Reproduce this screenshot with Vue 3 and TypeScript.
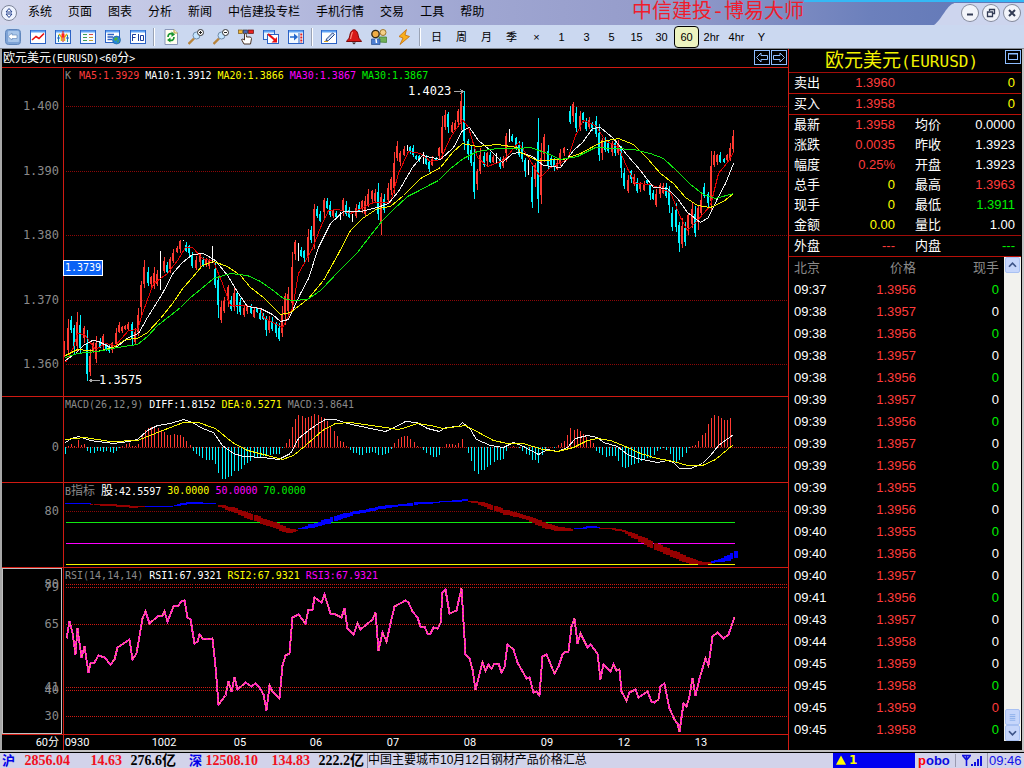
<script setup lang="ts">
interface Pane { top: number; height: number }
interface Bar { x: number; high: number; low: number; tone: string }
interface Legend { text: string; tone: string; han?: string }

const LEFT = 64
const WIDTH = 724

const menus = ['系统', '页面', '图表', '分析', '新闻', '中信建投专栏', '手机行情', '交易', '工具', '帮助']
const periods = ['日', '周', '月', '季', '×', '1', '3', '5', '15', '30', '60', '2hr', '4hr', 'Y']

const pricePane: Pane = { top: 68, height: 328 }
const macdPane: Pane = { top: 397, height: 85 }
const bandPane: Pane = { top: 483, height: 84 }
const rsiPane: Pane = { top: 568, height: 166 }

const box = (p: Pane) => `${LEFT - 0.5} ${p.top - 0.5} ${WIDTH} ${p.height}`
const topOf = (p: Pane, y: number) => ({ top: `${((y - p.top) / p.height) * 100}%` })
const leftOf = (x: number) => ({ left: `${((x - LEFT) / WIDTH) * 100}%` })

const priceScale = [
  { y: 106, label: '1.400' }, { y: 171, label: '1.390' }, { y: 235, label: '1.380' },
  { y: 300, label: '1.370' }, { y: 364, label: '1.360' },
]
const rsiScale = [
  { y: 584, label: '80' }, { y: 587, label: '79' }, { y: 624, label: '65' },
  { y: 687, label: '41' }, { y: 690, label: '40' }, { y: 716, label: '30' },
]

const priceLegend: Legend[] = [
  { text: 'MA5:1.3929', tone: 'red' }, { text: 'MA10:1.3912', tone: 'white' },
  { text: 'MA20:1.3866', tone: 'yellow' }, { text: 'MA30:1.3867', tone: 'magenta' },
  { text: 'MA30:1.3867', tone: 'green' },
]
const macdLegend: Legend[] = [
  { text: 'MACD(26,12,9)', tone: 'grey' }, { text: 'DIFF:1.8152', tone: 'white' },
  { text: 'DEA:0.5271', tone: 'yellow' }, { text: 'MACD:3.8641', tone: 'grey' },
]
const bandLegend: Legend[] = [
  { text: ':42.5597', tone: 'white', han: '股' }, { text: '30.0000', tone: 'yellow' },
  { text: '50.0000', tone: 'magenta' }, { text: '70.0000', tone: 'green' },
]
const rsiLegend: Legend[] = [
  { text: 'RSI(14,14,14)', tone: 'grey' }, { text: 'RSI1:67.9321', tone: 'white' },
  { text: 'RSI2:67.9321', tone: 'yellow' }, { text: 'RSI3:67.9321', tone: 'magenta' },
]

const candleText = `64 341 357 r;68 319 355 r;71 316 333 c;74 325 355 c;77 312 352 r;80 315 353 c;84 326 343 r;87 330 381 c;90 349 376 r;93 342 353 r;96 336 363 r;100 338 348 c;103 334 349 r;106 343 351 c;109 344 353 c;112 342 353 r;116 328 347 r;119 322 333 r;122 326 333 r;125 325 330 r;128 322 330 r;132 322 345 c;135 328 344 r;138 308 336 r;141 281 317 r;144 260 288 r;148 267 286 c;151 276 288 r;154 267 289 r;157 270 286 r;160 251 290 w;164 257 273 r;167 262 273 c;170 257 273 r;173 249 263 r;177 246 253 r;180 240 253 r;183 240 241 w;186 242 252 c;189 245 257 c;192 252 268 c;196 256 270 r;200 253 267 r;203 257 267 c;206 258 267 r;209 259 269 r;212 246 263 w;215 262 288 c;218 276 318 c;221 301 323 r;224 297 313 r;228 285 307 r;231 296 311 c;234 287 311 r;237 291 314 c;240 298 315 c;244 305 317 r;247 305 314 r;251 304 314 c;254 307 318 r;257 307 313 c;260 310 320 c;263 313 320 c;266 316 336 c;269 316 333 r;272 317 331 c;276 322 337 c;279 323 341 c;282 306 337 r;285 293 325 r;288 287 315 r;292 252 312 r;295 240 260 r;298 243 261 w;301 247 257 c;304 250 262 c;308 229 262 r;311 226 243 c;314 204 249 r;317 206 218 c;320 211 222 c;324 198 218 r;327 198 209 c;330 201 217 c;333 210 218 r;336 211 218 c;340 212 220 w;343 198 216 r;346 201 216 c;349 207 218 c;352 214 222 w;356 204 218 r;359 202 212 c;362 200 213 r;365 196 217 r;368 189 207 r;372 190 204 r;375 189 203 r;378 183 220 c;381 193 235 r;384 194 213 c;388 183 203 r;391 177 195 r;394 152 194 r;397 141 161 r;400 151 166 r;404 146 156 r;407 145 151 w;410 146 154 c;413 145 157 c;416 155 160 c;419 155 162 c;423 152 164 w;426 155 165 c;429 161 172 c;432 156 166 r;436 157 161 c;439 147 160 r;442 116 159 r;445 110 130 r;448 112 133 c;452 122 133 r;455 120 131 r;458 109 127 r;461 91 130 r;464 91 150 c;468 139 160 c;471 145 166 c;474 149 199 c;477 169 190 r;480 148 174 r;484 152 167 c;487 152 166 r;490 152 163 c;493 155 163 r;496 153 163 w;500 157 169 c;503 156 168 r;506 133 162 r;509 129 142 w;512 134 142 c;516 137 150 c;519 141 157 c;522 142 162 c;525 158 177 c;528 160 175 w;532 166 208 c;535 163 187 r;538 118 213 c;541 143 204 r;544 134 162 r;548 145 169 c;551 155 167 c;554 158 171 c;557 160 170 r;560 149 166 r;564 147 156 r;567 149 150 w;570 106 124 c;573 102 122 r;576 107 132 c;580 111 131 r;583 112 123 c;586 118 131 c;589 117 129 r;592 122 131 c;596 116 137 c;599 124 161 c;602 138 160 r;605 137 152 c;608 140 153 c;612 141 156 r;615 139 156 c;618 140 155 r;621 146 178 c;624 168 189 c;628 175 193 r;631 170 183 c;634 174 186 r;637 178 193 c;640 182 192 r;644 181 191 r;647 179 184 c;650 183 200 c;653 190 200 c;656 189 207 r;660 183 198 r;663 183 194 r;666 183 198 c;669 186 213 c;672 207 231 c;676 203 232 c;679 222 252 c;682 218 248 r;685 222 246 c;688 213 235 r;692 203 228 r;695 206 237 c;698 206 230 r;701 194 216 r;704 183 198 c;708 192 207 c;711 151 210 r;714 151 167 r;717 154 165 r;720 152 163 c;724 158 163 c;727 154 163 r;730 143 161 r;733 130 152 r`

const tones: Record<string, string> = { r: 'up', c: 'down', w: 'flat' }
const candles: Bar[] = candleText.split(';').map((entry) => {
  const [x, high, low, tone] = entry.split(' ')
  return { x: Number(x), high: Number(high), low: Number(low), tone: tones[tone] }
})
const bodyOf = (c: Bar, i: number) => {
  const span = c.low - c.high
  const head = Math.round(span * (i % 3 === 0 ? 0.1 : 0.25))
  return { y: c.high + head, h: Math.max(1, Math.round(span * 0.6)) }
}

const ma60 = '65,357 77,353 97,351 117,347 137,344 147,336 157,325 170,315 180,307 190,297 200,289 213,278 230,273 247,275 260,281 270,288 283,298 292,300 307,299 320,290 340,269 357,252 370,235 382,220 393,209 407,196 417,191 430,184 438,180 450,168 463,158 477,151 497,148 517,148 530,147 547,153 560,159 577,156 595,147 633,149 650,153 663,158 677,171 690,184 703,194 715,198 733,193'
const ma20 = '65,355 77,349 97,351 113,347 125,339 137,338 147,332 160,318 172,303 183,287 192,277 202,265 213,261 227,266 240,275 250,287 263,297 280,314 290,312 308,298 323,280 338,253 350,230 362,218 377,208 390,206 403,195 420,178 440,167 452,152 462,143 477,146 497,144 517,147 520,152 537,160 563,159 580,153 602,141 618,138 633,144 647,158 660,173 673,183 685,197 697,205 710,207 723,201 733,193'
const ma10 = '65,360 75,353 83,345 92,340 98,341 110,347 117,346 128,337 138,333 147,317 162,293 173,272 182,262 192,254 203,253 215,260 227,275 238,293 247,306 260,308 272,314 280,321 288,319 300,293 308,278 318,247 330,223 343,211 360,211 377,207 388,203 398,191 412,167 422,155 440,159 453,147 462,130 469,127 478,140 490,150 502,162 512,153 520,152 532,156 543,165 560,167 573,150 582,142 592,128 600,127 613,138 627,155 640,170 653,187 667,188 677,198 687,212 700,222 708,217 717,198 725,183 733,163'
const ma5 = '65,362 73,347 77,333 84,334 95,349 105,343 115,345 128,330 137,329 143,310 153,283 167,273 177,260 185,247 192,247 202,258 213,261 222,283 230,305 243,305 260,308 263,317 282,327 292,308 298,273 312,248 320,227 328,210 338,209 350,213 373,202 390,202 398,173 408,151 420,153 430,161 440,159 450,137 462,119 468,127 477,157 487,166 503,160 518,142 528,157 540,177 550,167 567,159 575,135 583,120 595,125 605,140 618,147 627,168 635,183 650,184 670,192 680,217 687,230 697,220 710,205 718,173 727,162 733,152'

const macdZero = 447
const macdValues = [
  -7, 1, 3, 1, 7, 2, 3, -4, -6, -6, -4, -4, -5, -4, -5, -6, -4, -1, 1, 3, 4, 1, 1, 3, 11, 17, 19, 20, 20, 19, 17, 15, 12, 12, 13, 12, 12, 10, 6, 2,
  -4, -7, -9, -11, -13, -13, -13, -17, -26, -32, -32, -30, -29, -24, -24, -22, -18, -16, -14, -11, -10, -10, -9, -9, -8, -7, -7, -7, -1, 4, 8, 20, 28, 32, 31, 29, 30, 31, 33, 32,
  30, 29, 26, 20, 16, 11, 6, 5, 1, -3, -6, -6, -8, -8, -6, -6, -5, -6, -8, -8, -7, -6, -2, 4,
  8, 10, 11, 11, 8, 5, 1, 0, -3, -6, -8, -10, -10, -8, 0, 3, 3, 3, 2, 4, 8, 0, -6, -14, -24, -27, -23, -23, -20, -18, -15, -13, -13, -12, -4, 0, 1, 0, -1, -4,
  -7, -8, -13, -13, -16, -8, -3, 0, 0, -1, 2, 4, 6, 12, 19, 17, 18, 16, 13, 10, 8, 4, -4, -6, -8, -10, -9, -9, -9, -14, -20, -21, -20, -18, -17, -16, -14, -12, -11, -11,
  -8, -4, -2, -1, -3, -7, -15, -16, -13, -10, -6, -1, 1, 2, 6, 12, 14, 23, 29, 32, 31, 29, 27, 27, 29,
]
const stepX = (i: number) => Math.floor(65.2 + i * 3.2)
const macdBars = macdValues.map((v, i) => ({ x: stepX(i), v })).filter((b) => b.v !== 0)
const diff = '65,442 71,438 78,436 90,440 113,443 128,441 137,439 147,430 157,425 170,423 183,419 192,422 202,428 213,432 222,445 233,453 243,456 263,457 278,459 290,453 298,438 308,430 318,423 325,419 335,419 347,423 370,428 385,431 398,425 405,421 416,422 427,428 439,431 445,427 458,426 462,422 470,429 476,439 490,445 503,447 513,442 523,446 538,454 547,449 557,451 567,447 575,438 587,435 597,437 603,442 617,446 627,454 637,458 657,462 667,460 673,462 679,468 690,468 702,463 710,455 718,445 733,434'
const dea = '65,439 84,437 110,441 137,440 157,432 183,422 198,422 215,428 232,442 247,450 263,454 282,459 293,455 305,445 322,430 335,423 350,422 385,427 398,429 405,427 417,423 430,425 443,428 465,425 480,433 493,440 507,443 523,443 542,449 557,451 573,447 587,440 597,438 610,440 625,446 640,453 657,458 673,461 687,465 702,465 715,459 727,449 733,444'

/* Each band is a run of [x, centre, thickness] knots. */
const bandRuns: { tone: string; knots: number[][] }[] = [
  { tone: 'blue', knots: [[65, 503, 1], [87, 503, 1]] },
  { tone: 'maroon', knots: [[88, 504, 1], [107, 505, 2], [133, 507, 2], [142, 506, 1]] },
  { tone: 'blue', knots: [[143, 506, 1], [170, 506, 1], [180, 504, 2], [190, 503, 2], [213, 503, 1]] },
  { tone: 'maroon', knots: [[216, 505, 2], [233, 510, 5], [250, 517, 6], [267, 523, 6], [280, 528, 6], [287, 531, 5], [295, 530, 1]] },
  { tone: 'blue', knots: [[297, 529, 1], [310, 526, 4], [327, 521, 5], [340, 516, 5], [357, 512, 3], [377, 508, 3], [400, 505, 2], [410, 504, 3], [437, 502, 1], [465, 500, 2]] },
  { tone: 'maroon', knots: [[467, 501, 1], [477, 503, 3], [490, 507, 5], [503, 512, 5], [523, 517, 4], [537, 523, 6], [553, 528, 5], [570, 530, 2]] },
  { tone: 'blue', knots: [[571, 529, 1], [590, 527, 2], [598, 527, 1]] },
  { tone: 'maroon', knots: [[599, 528, 1], [620, 530, 2], [633, 536, 5], [647, 543, 7], [667, 552, 7], [683, 559, 7], [697, 563, 4], [708, 563, 2]] },
  { tone: 'blue', knots: [[709, 562, 1], [717, 561, 3], [727, 558, 6], [734, 554, 7]] },
]
const bandBars = Array.from({ length: 210 }, (_, i) => stepX(i)).flatMap((x) => {
  for (const run of bandRuns) {
    for (let k = 1; k < run.knots.length; k++) {
      const [x0, y0, t0] = run.knots[k - 1]
      const [x1, y1, t1] = run.knots[k]
      if (x >= x0 && x <= x1) {
        const f = (x - x0) / (x1 - x0)
        const h = Math.round(t0 + (t1 - t0) * f)
        return [{ x, y: Math.round(y0 + (y1 - y0) * f - h / 2), h, tone: run.tone }]
      }
    }
  }
  return []
})

const rsi = '66,638 69,621 72,632 75,654 77,628 81,657 84,646 88,672 90,663 94,662 98,655 104,657 110,664 114,659 117,647 129,639 132,659 136,653 142,618 145,611 149,623 157,616 162,615 164,611 167,621 173,606 178,605 181,601 184,600 187,617 190,619 194,643 197,641 199,634 203,639 212,638 215,666 218,704 225,695 228,681 231,691 234,677 237,689 245,682 251,686 255,683 259,687 263,694 266,710 269,685 272,691 279,698 282,665 285,655 289,653 292,617 298,614 305,623 308,609 312,609 314,597 321,602 324,594 330,613 333,613 341,617 344,608 347,628 353,634 357,623 360,629 372,619 375,612 378,650 382,632 386,641 390,623 394,606 405,600 408,602 412,611 417,617 420,626 424,626 427,633 430,633 433,627 437,628 440,623 442,592 445,589 449,613 456,610 461,588 465,654 469,658 472,669 475,689 482,662 485,670 488,664 491,668 494,663 498,663 501,672 504,667 507,644 513,649 517,662 526,678 529,677 533,692 536,691 539,695 542,656 546,654 554,673 558,666 562,654 565,651 568,651 571,626 574,618 577,643 580,633 587,647 590,644 597,653 600,679 603,664 610,671 613,664 616,670 619,669 621,691 626,700 629,692 635,689 638,697 647,691 651,701 654,702 658,699 660,686 664,683 669,708 674,719 677,723 679,731 683,703 686,706 689,696 692,678 695,695 699,678 705,658 708,665 712,636 717,632 723,638 728,634 734,617'

const dates = [
  { x: 77, label: '0930' }, { x: 164, label: '1002' }, { x: 240, label: '05' },
  { x: 316, label: '06' }, { x: 393, label: '07' }, { x: 470, label: '08' },
  { x: 547, label: '09' }, { x: 624, label: '12' }, { x: 701, label: '13' },
]

const quotes = [
  ['最新', '1.3958', 'red', '均价', '0.0000', 'white'],
  ['涨跌', '0.0035', 'red', '昨收', '1.3923', 'white'],
  ['幅度', '0.25%', 'red', '开盘', '1.3923', 'white'],
  ['总手', '0', 'yellow', '最高', '1.3963', 'red'],
  ['现手', '0', 'yellow', '最低', '1.3911', 'green'],
  ['金额', '0.00', 'yellow', '量比', '1.00', 'white'],
]
const ticks = [
  ['09:37', '1.3956', 'green'], ['09:38', '1.3957', 'white'], ['09:38', '1.3956', 'green'],
  ['09:38', '1.3957', 'white'], ['09:38', '1.3956', 'green'], ['09:39', '1.3957', 'white'],
  ['09:39', '1.3956', 'green'], ['09:39', '1.3957', 'white'], ['09:39', '1.3956', 'green'],
  ['09:39', '1.3955', 'green'], ['09:39', '1.3956', 'white'], ['09:40', '1.3955', 'green'],
  ['09:40', '1.3956', 'white'], ['09:40', '1.3957', 'white'], ['09:41', '1.3956', 'green'],
  ['09:43', '1.3957', 'white'], ['09:44', '1.3958', 'white'], ['09:45', '1.3959', 'white'],
  ['09:45', '1.3958', 'green'], ['09:45', '1.3959', 'red'], ['09:45', '1.3958', 'green'],
]
</script>

<template>
  <div class="app">
    <header class="menubar">
      <svg class="logo" viewBox="0 0 18 18" aria-hidden="true">
        <circle cx="9" cy="9" r="7.5" fill="#eef3ff" stroke="#7d8498" />
        <path d="M6 8 9 4.500 12 8ZM6 10 9 13.500 12 10Z" fill="#fff" stroke="#24418c" />
      </svg>
      <nav class="menus">
        <button v-for="m in menus" :key="m" type="button">{{ m }}</button>
      </nav>
      <h1>中信建投-博易大师</h1>
      <div class="window-edge">
        <svg class="corner" viewBox="0 0 28 25" aria-hidden="true">
          <path d="M0 25C8 20 13 3 22 3H28V25Z" fill="#cdd5ee" />
        </svg>
        <div class="controls">
          <button type="button" aria-label="最小化"><svg viewBox="0 0 16 16"><path d="M5 9.500H11" stroke="#333c55" stroke-width="2" /></svg></button>
          <button type="button" aria-label="还原"><svg viewBox="0 0 16 16"><path d="M6.500 6V4.500H11.500V8.500H10M4.500 7H9.500V11.500H4.500Z" fill="none" stroke="#333c55" stroke-width="1.300" /></svg></button>
          <button type="button" aria-label="关闭"><svg viewBox="0 0 16 16"><path d="M5 5 11 11M11 5 5 11" stroke="#333c55" stroke-width="2" /></svg></button>
        </div>
      </div>
    </header>

    <div class="toolbar">
      <button type="button" aria-label="返回"><svg viewBox="0 0 16 16"><rect x=".5" y=".5" width="15" height="15" rx="3" fill="#7ea3d6" stroke="#5f86bd" /><rect x="3" y="2" width="11" height="11" rx="1" fill="#a9c6ea" /><path d="M3 7.500 7 4V6H12V9.500H7V11Z" fill="#fff" stroke="#5d80b4" stroke-width=".6" /></svg></button>
      <button type="button" aria-label="分时图"><svg viewBox="0 0 16 16"><rect x=".5" y="1.500" width="15" height="13" fill="#fff" stroke="#2b62c4" /><path d="M1 2.500H15" stroke="#62a5f5" stroke-width="2" /><path d="M2 11 6 7.500 9 9.500 14 4.500" fill="none" stroke="#e81010" stroke-width="1.600" /></svg></button>
      <button type="button" aria-label="K线图"><svg viewBox="0 0 16 16"><rect x=".5" y="1.500" width="15" height="13" fill="#eef7ff" stroke="#2b62c4" /><path d="M1 2.500H15" stroke="#62a5f5" stroke-width="2" /><path d="M3.500 6V13M12.500 6V13" stroke="#198f9d" /><path d="M2.500 9H4.500M11.500 9H13.500" stroke="#2b62c4" stroke-width="2" /><path d="M4 5 6.500 8V12M12 5 9.500 8V12" fill="none" stroke="#e4b110" stroke-width="1.500" /><path d="M8 2V13" stroke="#e01010" /><path d="M6.500 6.500H9.500" stroke="#f22" stroke-width="4" /></svg></button>
      <button type="button" aria-label="报价表"><svg viewBox="0 0 16 16"><rect x=".5" y="1.500" width="15" height="13" fill="#f5faff" stroke="#2b62c4" /><path d="M1 2.500H15" stroke="#62a5f5" stroke-width="2" /><path d="M3 5.500H7M3 8.500H7M3 11.500H7" stroke="#3d9d59" /><path d="M9 5.500H13" stroke="#db4242" /><path d="M9 8.500H13M9 11.500H13" stroke="#bf9b30" /></svg></button>
      <button type="button" aria-label="资讯"><svg viewBox="0 0 16 16"><rect x=".5" y="1.500" width="14" height="12" fill="#fff" stroke="#2b62c4" /><path d="M1 2.500H14" stroke="#62a5f5" stroke-width="2" /><path d="M2.500 5.500H9M2.500 8H8M2.500 10.500H7" stroke="#2d5fc0" stroke-width="1.300" /><circle cx="11.500" cy="11" r="4" fill="#2687d8" stroke="#1b5b9c" stroke-width=".6" /><path d="M9 10C10 8 12 8 13 9L12 11 10 12ZM12 12 14 11 13 14Z" fill="#4fb13b" /></svg></button>
      <button type="button" aria-label="F10"><svg viewBox="0 0 16 16"><rect x=".5" y="1.500" width="15" height="13" fill="#fff" stroke="#2b62c4" /><path d="M1 2.500H15" stroke="#62a5f5" stroke-width="2" /><path d="M2.500 12V5.500H6M2.500 8.500H5.500M8.500 5V12M10.500 6.500H13.500V11.500H10.500Z" fill="none" stroke="#1c3f9c" /></svg></button>
      <i class="split"></i>
      <button type="button" aria-label="刷新"><svg viewBox="0 0 16 16"><path d="M2 .500H11L14.500 4V15.500H2Z" fill="#fffef0" stroke="#8896b8" /><path d="M11 .500V4H14.500" fill="#fff4b0" stroke="#b2a24c" /><path d="M5 8C5 5 7 4 9.500 5M11 8C11 11 9 12 6.500 11" fill="none" stroke="#189530" stroke-width="1.700" /><path d="M8.500 2.500 12 5.500 8.500 8ZM7.500 8.500V13.500L4 11Z" fill="#189530" /></svg></button>
      <button type="button" aria-label="放大"><svg viewBox="0 0 16 16"><path d="M.500 15 6 9.500" stroke="#b8843c" stroke-width="2.400" /><circle cx="8.500" cy="6.500" r="3.500" fill="#c4e4ff" stroke="#6f8ba8" /><circle cx="12.500" cy="3.500" r="3" fill="#fff" stroke="#333" /><path d="M11 3.500H14M12.500 2V5" stroke="#222" /></svg></button>
      <button type="button" aria-label="缩小"><svg viewBox="0 0 16 16"><path d="M.500 15 6 9.500" stroke="#b8843c" stroke-width="2.400" /><circle cx="8.500" cy="6.500" r="3.500" fill="#c4e4ff" stroke="#6f8ba8" /><circle cx="12.500" cy="3.500" r="3" fill="#fff" stroke="#333" /><path d="M11 3.500H14" stroke="#222" /></svg></button>
      <button type="button" aria-label="选择"><svg viewBox="0 0 16 16"><rect x=".5" y="1" width="4" height="3.500" fill="#f2b632" stroke="#76561c" stroke-width=".7" /><rect x="5.500" y="1" width="4" height="3.500" fill="#4a68b8" stroke="#333" stroke-width=".7" /><rect x="10.500" y="1" width="5" height="3.500" fill="#e82020" stroke="#611" stroke-width=".7" /><path d="M7 4.500C8 4 8.500 5 8.500 8H12.500L13.500 9.500 12.500 15H6L3.500 10.500 5 10 6.500 11V5Z" fill="#fff" stroke="#4a3528" /></svg></button>
      <button type="button" aria-label="切换窗口"><svg viewBox="0 0 16 16"><rect x=".5" y="1.500" width="11" height="9" fill="#e8f4ff" stroke="#2b62c4" /><rect x="4.500" y="5.500" width="11" height="9" fill="#fff" stroke="#2b62c4" /><path d="M1 2.500H11" stroke="#62a5f5" stroke-width="2" /><path d="M5 5 12 11" stroke="#e81010" stroke-width="2.200" /><path d="M14 13.500H8.500L14 8Z" fill="#e81010" /></svg></button>
      <button type="button" aria-label="侧栏"><svg viewBox="0 0 16 16"><rect x=".5" y="1.500" width="15" height="13" fill="#f2f9ff" stroke="#2b62c4" /><path d="M1 2.500H15" stroke="#62a5f5" stroke-width="2" /><path d="M2 8H8" stroke="#2467cc" stroke-width="1.500" /><path d="M6 4.500 10 8 6 11.500Z" fill="#2467cc" /><path d="M11 4V14" stroke="#2b62c4" /><path d="M13.300 4.500V14" stroke="#e02020" stroke-width="2" stroke-dasharray="2 1" /></svg></button>
      <i class="split"></i>
      <button type="button" aria-label="画线"><svg viewBox="0 0 16 16"><rect x=".5" y="1.500" width="15" height="13" fill="#fff" stroke="#2b62c4" /><path d="M1 2.500H15" stroke="#62a5f5" stroke-width="2" /><path d="M5.500 10 11.500 4 13.500 5.500 7.500 11.500 5 12Z" fill="#cfe0fa" stroke="#27437f" /><path d="M3 12.500H7" stroke="#d9a520" /></svg></button>
      <button type="button" aria-label="预警"><svg viewBox="0 0 16 16"><path d="M8 .800C10.500 .800 12 4 12.500 8 13 10 14.500 10.500 15.500 12.500H.500C1.500 10.500 3 10 3.500 8 4 4 5.500 .800 8 .800Z" fill="#d71919" stroke="#7a0909" /><path d="M6.500 3C5.500 5 5 8 4.500 10" fill="none" stroke="#ff8a7a" stroke-width="1.200" /><path d="M6 13.500H10L8 15.500Z" fill="#2f2222" /></svg></button>
      <button type="button" aria-label="用户"><svg viewBox="0 0 16 16"><circle cx="12" cy="3.500" r="3" fill="#f4cf88" stroke="#a0762c" /><path d="M8 13V8H15.500V13.500Z" fill="#72b158" stroke="#3c7a2b" stroke-width=".7" /><circle cx="4.500" cy="5" r="3.700" fill="#f0ad45" stroke="#302817" stroke-width="1.300" /><path d="M.500 15V10H9V15.500H.500Z" fill="#4d7fd2" stroke="#28508f" stroke-width=".7" /><path d="M5 10 5.500 14" stroke="#fff" stroke-width="1.500" /></svg></button>
      <button type="button" aria-label="闪电下单"><svg viewBox="0 0 16 16"><path d="M10.500 .500 3 7.500 7 9 4 15.500 13.500 7.500 9 6Z" fill="#f9ae1c" stroke="#c26d0c" stroke-width=".8" /></svg></button>
      <i class="split"></i>
      <button v-for="p in periods" :key="p" type="button" class="period" :class="{ active: p === '60' }">{{ p }}</button>
    </div>

    <main class="workspace">
      <section class="charts">
        <div class="chart-title">
          <h2>欧元美元<span class="mono">(EURUSD)&lt;60</span>分<span class="mono">&gt;</span></h2>
          <div class="pager">
            <button type="button" aria-label="上一个"><svg viewBox="0 0 14 13"><path d="M1.500 6.500 6 2V4.500H12.500V8.500H6V11Z" fill="none" stroke="#8dbdff" /></svg></button>
            <button type="button" aria-label="下一个"><svg viewBox="0 0 14 13"><path d="M12.500 6.500 8 2V4.500H1.500V8.500H8V11Z" fill="none" stroke="#8dbdff" /></svg></button>
          </div>
        </div>

        <div class="pane">
          <div class="scale">
            <span v-for="s in priceScale" :key="s.label" :style="topOf(pricePane, s.y)">{{ s.label }}</span>
          </div>
          <div class="plot">
            <svg :viewBox="box(pricePane)" preserveAspectRatio="none" aria-hidden="true">
              <path v-for="s in priceScale" :key="s.y" class="grid" :d="`M65 ${s.y}H787`" />
              <g v-for="(c, i) in candles" :key="c.x" :class="c.tone">
                <rect :x="c.x - 0.5" :y="c.high - 0.5" width="1" :height="c.low - c.high" />
                <rect v-if="c.tone !== 'flat'" :x="c.x - 1.5" :y="bodyOf(c, i).y - 0.5" width="2" :height="bodyOf(c, i).h" />
              </g>
              <polyline class="line ma5" :points="ma5" />
              <polyline class="line ma10" :points="ma10" />
              <polyline class="line ma20" :points="ma20" />
              <polyline class="line ma60" :points="ma60" />
              <path class="pointer" d="M453 91H463M460 89 463 91 460 93M99 380H89M92 378 89 380 92 382" />
            </svg>
            <div class="legend"><span class="grey key">K</span><span v-for="(l, i) in priceLegend" :key="i" :class="l.tone">{{ l.text }}</span></div>
            <span class="note" :style="[topOf(pricePane, 91), leftOf(408)]">1.4023</span>
            <span class="note" :style="[topOf(pricePane, 380), leftOf(99)]">1.3575</span>
            <span class="tag" :style="topOf(pricePane, 268)">1.3739</span>
          </div>
        </div>

        <div class="pane">
          <div class="scale"><span :style="topOf(macdPane, 447)">0</span></div>
          <div class="plot">
            <svg :viewBox="box(macdPane)" preserveAspectRatio="none" aria-hidden="true">
              <path class="grid bright" d="M65 447H787" />
              <rect v-for="b in macdBars" :key="b.x" :class="b.v > 0 ? 'up' : 'down'" :x="b.x - 0.5" :y="(b.v > 0 ? macdZero - b.v : macdZero) - 0.5" width="1" :height="Math.abs(b.v)" />
              <polyline class="line ma10" :points="diff" />
              <polyline class="line ma20" :points="dea" />
            </svg>
            <div class="legend"><span v-for="l in macdLegend" :key="l.text" :class="l.tone">{{ l.text }}</span></div>
          </div>
        </div>

        <div class="pane">
          <div class="scale"><span :style="topOf(bandPane, 511)">80</span></div>
          <div class="plot">
            <svg :viewBox="box(bandPane)" preserveAspectRatio="none" aria-hidden="true">
              <path class="grid" d="M65 511H787" />
              <path class="line ma60" d="M65 522H734" />
              <path class="line level" d="M65 543H734" />
              <path class="line ma20" d="M65 564H734" />
              <rect v-for="b in bandBars" :key="b.x" :class="b.tone" :x="b.x - 0.5" :y="b.y - 0.5" :width="b.x % 5 ? 4 : 3" :height="b.h" />
            </svg>
            <div class="legend"><span class="grey">B<b>指标</b></span><span v-for="l in bandLegend" :key="l.text" :class="l.tone"><b v-if="l.han">{{ l.han }}</b>{{ l.text }}</span></div>
          </div>
        </div>

        <div class="pane">
          <div class="scale selected">
            <span v-for="s in rsiScale" :key="s.label" :style="topOf(rsiPane, s.y)">{{ s.label }}</span>
          </div>
          <div class="plot">
            <svg :viewBox="box(rsiPane)" preserveAspectRatio="none" aria-hidden="true">
              <path v-for="s in rsiScale" :key="s.y" class="grid bright" :d="`M65 ${s.y}H787`" />
              <polyline class="line rsi" :points="rsi" />
              <polyline class="line rsi-dots" :points="rsi" />
            </svg>
            <div class="legend"><span v-for="l in rsiLegend" :key="l.text" :class="l.tone">{{ l.text }}</span></div>
          </div>
        </div>

        <div class="pane dates">
          <div class="unit">60分</div>
          <div class="plot"><span v-for="d in dates" :key="d.label" :style="leftOf(d.x)">{{ d.label }}</span></div>
        </div>
      </section>

      <aside class="quote">
        <div class="symbol">
          <h2>欧元美元<span class="mono">(EURUSD)</span></h2>
          <button type="button" aria-label="展开"><svg viewBox="0 0 16 14"><rect x="3.500" y="3.500" width="9" height="6" fill="none" stroke="#8dbdff" /><path d="M3 4H13" stroke="#8dbdff" /></svg></button>
        </div>
        <dl class="row ruled"><dt>卖出</dt><dd class="red">1.3960</dd><dt></dt><dd class="yellow">0</dd></dl>
        <dl class="row ruled"><dt>买入</dt><dd class="red">1.3958</dd><dt></dt><dd class="yellow">0</dd></dl>
        <dl v-for="q in quotes" :key="q[0]" class="row"><dt>{{ q[0] }}</dt><dd :class="q[2]">{{ q[1] }}</dd><dt>{{ q[3] }}</dt><dd :class="q[5]">{{ q[4] }}</dd></dl>
        <dl class="row over ruled"><dt>外盘</dt><dd class="red">---</dd><dt>内盘</dt><dd class="green">---</dd></dl>
        <div class="ticks">
          <table>
            <thead><tr><th>北京</th><th>价格</th><th>现手</th></tr></thead>
            <tbody>
              <tr v-for="(t, i) in ticks" :key="i"><td>{{ t[0] }}</td><td class="red">{{ t[1] }}</td><td :class="t[2]">0</td></tr>
            </tbody>
          </table>
          <div class="scroll">
            <button type="button" aria-label="向上"><svg viewBox="0 0 14 16"><path d="M3 10 7 6 11 10" fill="none" stroke="#3d5488" stroke-width="2" /></svg></button>
            <div class="track"></div>
            <div class="thumb"><svg viewBox="0 0 14 14"><path d="M4 4.500H10M4 6.500H10M4 8.500H10M4 10.500H10" stroke="#8aaee8" /></svg></div>
            <button type="button" aria-label="向下"><svg viewBox="0 0 14 16"><path d="M3 6 7 10 11 6" fill="none" stroke="#3d5488" stroke-width="2" /></svg></button>
          </div>
        </div>
      </aside>
    </main>

    <footer class="status">
      <div class="index">
        <strong>沪</strong><span class="n1">2856.04</span><span class="n2">14.63</span><span class="n3">276.6亿</span>
      </div>
      <div class="index second">
        <strong>深</strong><span class="n1">12508.10</span><span class="n2">134.83</span><span class="n3">222.2亿</span>
      </div>
      <p class="news">中国主要城市10月12日钢材产品价格汇总</p>
      <div class="alert"><svg viewBox="0 0 12 12"><path d="M6 0 12 11H0Z" fill="#ff0" /></svg>1</div>
      <div class="brand"><em>p</em>obo</div>
      <div class="signal"><svg viewBox="0 0 22 13" aria-hidden="true"><path d="M1 1.500H10M2 2 5.500 6 9 2M5.500 2V12" fill="none" stroke="#11d" stroke-width="1.600" /><path d="M11 10V12M14 8V12M17 5V12M20 2V12" stroke="#11d" stroke-width="2" /></svg></div>
      <time>09:46</time>
    </footer>
  </div>
</template>

<style>
body { margin: 0; background: #000; }
</style>

<style scoped>
.app {
  display: flex; flex-direction: column; min-height: 100vh; box-sizing: border-box;
  font: 12px/16px "Liberation Sans", "Noto Sans CJK SC", sans-serif; color: #fff; background: #000;
}
button { padding: 0; border: 0; margin: 0; background: none; color: inherit; font: inherit; }
h1, h2, p, dl, dt, dd { margin: 0; font-weight: 400; }
b, strong, em { font-weight: inherit; font-style: normal; }
svg { display: block; }
.mono { font-family: "DejaVu Sans Mono", monospace; }

.menubar {
  display: flex; align-items: center; height: 25px; color: #000;
  background: linear-gradient(90deg, #d2d6ec 0, #b9bee0 25%, #a0a7d2 45%, #949bca 65%, #6c80bc 85%, #5f76b6 100%);
}
.logo { width: 18px; height: 18px; }
.menus { display: flex; margin-left: 2px; }
.menus button { padding: 0 8px; line-height: 25px; white-space: nowrap; }
.menubar h1 { margin-left: auto; color: #f01c2c; font: 20px/25px "Liberation Mono", "Noto Sans CJK SC", monospace; white-space: nowrap; }
.window-edge {
  flex: none; display: flex; width: 220px; height: 25px; box-sizing: border-box;
  justify-content: flex-end; background: linear-gradient(#35b8f5 0 2px, transparent 2px);
}
.corner { flex: none; width: 28px; height: 25px; margin-right: -8px; }
.controls { display: flex; align-items: center; gap: 5px; padding: 0 4px 0 8px; background: linear-gradient(transparent 3px, #cdd5ee 3px); }
.controls button { width: 16px; height: 16px; border-radius: 8px; background: #f2f4fa; box-shadow: 0 0 0 1px #858b9c; }

.toolbar { display: flex; height: 23px; align-items: center; color: #000; background: #cbd8f0; border-bottom: 1px solid #848a94; }
.toolbar button { flex: none; width: 25px; height: 22px; }
.toolbar button svg { width: 16px; height: 16px; margin: 0 auto; }
.split { flex: none; box-sizing: border-box; width: 2px; height: 18px; margin: 0 3px; border-left: 1px solid #9aa3b5; border-right: 1px solid #fff; }
.toolbar .period { font-size: 11px; line-height: 22px; white-space: nowrap; }
.toolbar .active { box-sizing: border-box; line-height: 20px; border: 1px solid #000; border-radius: 4px; background: #ecf3c0; }

.workspace {
  flex: 1; display: flex; padding: 0 2px; margin-bottom: 2px;
  background: linear-gradient(90deg, #a8a8a8 0 2px, #000 2px calc(100% - 2px), #c4c4c4 calc(100% - 2px));
}
.charts { flex: 1; min-width: 0; display: grid; grid-template-rows: 18px 329fr 86fr 85fr 167fr 16px; }
.chart-title { display: flex; justify-content: space-between; padding: 0 1px; }
.chart-title h2 { font-size: 12px; line-height: 18px; }
.chart-title .mono { font-size: 10px; }
.pager { display: flex; gap: 1px; padding-top: 1px; }
.pager button { box-sizing: border-box; width: 16px; height: 15px; border: 1px solid #8dbdff; }

.pane { display: flex; min-height: 0; border-top: 1px solid #d01a12; }
.scale { position: relative; flex: none; width: 61px; color: #8a8a8a; font: 12px/14px "DejaVu Sans Mono", monospace; }
.scale span { position: absolute; right: 4px; transform: translateY(-50%); }
.selected::before { content: ""; position: absolute; inset: 0 1px 0 0; border: 1px solid #c0c0c0; }
.plot { position: relative; flex: 1; min-width: 0; border-left: 1px solid #d01a12; }
.plot > svg { position: absolute; inset: 0; width: 100%; height: 100%; shape-rendering: crispEdges; }
.legend { position: absolute; top: 1px; left: 1px; display: flex; gap: 6px; font: 10px/14px "DejaVu Sans Mono", "Noto Sans CJK SC", monospace; white-space: nowrap; }
.legend b { font-size: 12px; line-height: 14px; }
.legend .key { margin-right: 2px; }
.note { position: absolute; transform: translateY(-50%); font: 12px/14px "DejaVu Sans Mono", monospace; }
.tag {
  position: absolute; left: -1px; transform: translateY(-50%); padding: 0 1px; border: 1px solid #fff;
  background: #0a62f5; font: 10px/14px "DejaVu Sans Mono", monospace;
}
.dates { font: 11px/15px Roboto, "Noto Sans CJK SC", sans-serif; }
.unit { flex: none; box-sizing: border-box; width: 61px; padding-right: 4px; text-align: right; }
.dates .plot span { position: absolute; transform: translateX(-50%); }

.grid { stroke: #8c0808; stroke-dasharray: 1 1; fill: none; }
.grid.bright { stroke: #d01a12; }
.up { fill: #ff3a32; }
.down { fill: #00f4ff; }
.flat { fill: #fff; }
.blue { fill: #0000ff; }
.maroon { fill: #960000; }
.line { fill: none; stroke-width: 1; }
.ma5 { stroke: #e00000; }
.ma10 { stroke: #f0f0f0; }
.ma20 { stroke: #f4f400; }
.ma60 { stroke: #10e810; }
.level { stroke: #ff00ff; }
.rsi { stroke: #ff22c4; stroke-width: 2; }
.rsi-dots { stroke: #ff8a70; stroke-dasharray: 2 2; }
.pointer { fill: none; stroke: #a8a8a8; }

.red { color: #ff3c3c; }
.white { color: #fff; }
.yellow { color: #ffff00; }
.magenta { color: #ff00ff; }
.green { color: #00f000; }
.grey { color: #8a8a8a; }

.quote { flex: none; box-sizing: border-box; width: 234px; display: flex; flex-direction: column; padding-right: 1px; border-left: 1px solid #d01a12; font-size: 13px; }
.symbol { display: flex; height: 23px; border-bottom: 1px solid #a00c08; }
.symbol h2 { flex: 1; padding-left: 9px; text-align: center; color: #f2f200; font-size: 19px; line-height: 23px; white-space: nowrap; }
.symbol .mono { font-size: 16px; }
.symbol button { box-sizing: border-box; width: 16px; height: 14px; margin-top: 1px; border: 1px solid #8dbdff; }
.symbol button svg { margin: -1px; width: 16px; height: 14px; }
.row { display: grid; grid-template-columns: 40px 61px 60px 1fr; padding: 0 6px 0 5px; line-height: 20px; }
.row dt:nth-of-type(2) { padding-left: 20px; }
.row dd { text-align: right; }
.ruled { border-bottom: 1px solid #b81008; }
.over { border-top: 1px solid #a00c08; line-height: 19px; padding-bottom: 1px; }
.ticks { flex: 1; display: flex; align-items: flex-start; }
table { flex: 1; border-collapse: collapse; table-layout: fixed; }
th, td { height: 22px; padding: 0 5px; line-height: 22px; font-weight: 400; text-align: right; }
th { color: #8a8a8a; }
th:first-child, td:first-child { width: 50px; text-align: left; }
th:nth-child(2), td:nth-child(2) { width: 62px; }
.scroll { flex: none; display: flex; flex-direction: column; width: 17px; height: 484px; background: #f2f2ee; }
.scroll button, .thumb { flex: none; box-sizing: border-box; width: 15px; height: 16px; margin: 0 1px; border: 1px solid #a9c1f2; border-radius: 2px; background: #c6d6fb; }
.scroll svg { width: 13px; height: 14px; }
.track { flex: 1; }

.status {
  display: flex; align-items: center; height: 15px; margin-top: 1px;
  color: #000; background: #d2d3ea; box-shadow: 0 -1px #000, 0 -3px #c0c0c0;
}
.index { display: grid; grid-template-columns: 13px 55px 52px 54px; padding-left: 2px; font: bold 14px/15px "Liberation Serif", "Noto Sans CJK SC", serif; text-align: right; white-space: nowrap; }
.second { grid-template-columns: 13px 56px 52px 54px; padding-left: 13px; }
.index strong { color: #0000e8; font-size: 13px; }
.n1, .n2 { color: #f01020; }
.news { flex: 1; margin-left: 3px; border-left: 1px solid #8888a0; line-height: 15px; white-space: nowrap; }
.alert { display: flex; align-items: center; gap: 3px; box-sizing: border-box; width: 82px; height: 15px; padding-left: 3px; background: #0000f0; color: #ff0; font: bold 12px/15px "DejaVu Sans", sans-serif; }
.alert svg { width: 10px; height: 11px; }
.brand { width: 37px; padding-left: 3px; color: #0a0ae0; font: bold 13px/13px "Liberation Sans", sans-serif; }
.brand em { color: #f00; }
.signal { box-sizing: border-box; width: 32px; padding-left: 5px; border-left: 1px solid #9a9ab0; }
.signal svg { width: 22px; height: 13px; }
time { box-sizing: border-box; width: 37px; padding-left: 1px; border-left: 1px solid #9a9ab0; color: #1010e8; font-size: 13px; line-height: 15px; }
</style>
